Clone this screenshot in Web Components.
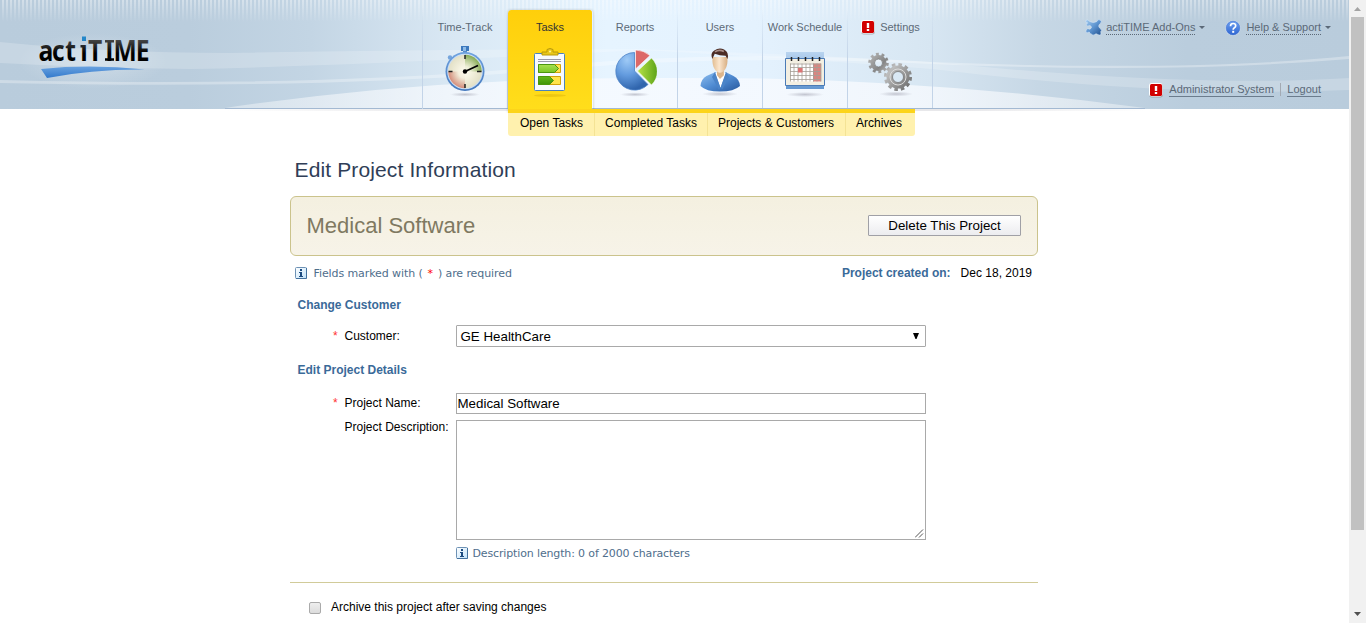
<!DOCTYPE html>
<html lang="en">
<head>
<meta charset="utf-8">
<title>actiTIME - Edit Project Information</title>
<style>
html,body{margin:0;height:100%;overflow:hidden;background:#fff;font:12px "Liberation Sans",Arial,sans-serif;color:#000}
</style>
</head>
<body>
<at-app></at-app>
<script>
const define=(name,html,setup)=>customElements.define(name,class extends HTMLElement{
  connectedCallback(){
    if(this.shadowRoot)return;
    const t=document.createElement('template');
    t.innerHTML=html;
    this.attachShadow({mode:'open'}).append(t.content.cloneNode(true));
    if(setup)setup(this,this.shadowRoot);
  }
});

const icons={
clock:`<svg width="44" height="52" viewBox="0 0 44 52"><defs><linearGradient id="r" x2="0" y2="1"><stop stop-color="#6fa3e0"/><stop offset="1" stop-color="#4478bd"/></linearGradient><radialGradient id="s"><stop stop-color="#889" stop-opacity=".45"/><stop offset="1" stop-color="#889" stop-opacity="0"/></radialGradient><radialGradient id="f"><stop stop-color="#fffdf0"/><stop offset="1" stop-color="#e3e0c6"/></radialGradient><radialGradient id="gr" gradientUnits="userSpaceOnUse" cx="22" cy="25.500" r="16.700"><stop offset=".3" stop-color="#a9c67e" stop-opacity=".1"/><stop offset="1" stop-color="#84ab55"/></radialGradient><radialGradient id="rd" gradientUnits="userSpaceOnUse" cx="22" cy="25.500" r="16.700"><stop offset=".4" stop-color="#e0a594" stop-opacity=".05"/><stop offset="1" stop-color="#d58c7c"/></radialGradient></defs>
<ellipse cx="22" cy="48.500" rx="15" ry="2.200" fill="url(#s)"/><path d="M18 0h8v5h-8z" fill="#3d79bd"/><path d="M20 1h3v4h-3z" fill="#8fbce8"/><path d="M20 5h4v3h-4z" fill="#5a8cc8"/><circle cx="7" cy="11.500" r="2.200" fill="#76a5dc"/><path d="m8 12 3 3" stroke="#76a5dc" stroke-width="2"/><circle cx="22" cy="25.500" r="19.500" fill="url(#r)"/><circle cx="22" cy="25.500" r="17.800" fill="#c9ddf5"/><circle cx="22" cy="25.500" r="16.700" fill="url(#f)"/><path d="M22 8.800A16.700 16.700 0 0 1 38.700 25.500H22z" fill="url(#gr)"/><path d="M22 42.200A16.700 16.700 0 0 1 5.300 25.500H22z" fill="url(#rd)"/><path d="M22 9v4M22 38v4M5.500 25.500h4M34 25.500h4.500" stroke="#222" stroke-width="1.500"/><path d="m22 25.500 13-6" stroke="#000" stroke-width="1.800"/><circle cx="22" cy="25.500" r="2.200"/></svg>`,
tasks:`<svg width="44" height="52" viewBox="0 0 44 52"><defs><linearGradient id="g" x2="0" y2="1"><stop stop-color="#a8e04e"/><stop offset=".5" stop-color="#6cbf1e"/><stop offset="1" stop-color="#3f9408"/></linearGradient></defs><ellipse cx="22" cy="49.500" rx="16" ry="1.500" fill="#c89a00" opacity=".3"/><rect x="6.500" y="7.500" width="30" height="37" rx="1" fill="#f8faff" stroke="#4a83be"/><path d="M14 9V6h5V3.500q3-2 6 0V6h5v3z" fill="#e9c71b" stroke="#b9980b"/><circle cx="22" cy="5.500" r="1" fill="#fff5a0"/><path d="M10 13.500h23M10 15.500h23" stroke="#99a"/><path d="M10.500 18.500h22v8h-22zM10.500 30.500h22v8h-22z" fill="#ffe44c" stroke="#d1a30c"/><path d="M10.500 18.500h16l4 4-4 4h-16zM10.500 30.500h11l4 4-4 4h-11z" fill="url(#g)" stroke="#4b960f"/></svg>`,
reports:`<svg width="44" height="52" viewBox="0 1 44 52"><defs><radialGradient id="p" cx=".35" cy=".2" r=".8"><stop stop-color="#9ecaf6"/><stop offset=".5" stop-color="#649cdf"/><stop offset="1" stop-color="#3065ad"/></radialGradient><linearGradient id="g"><stop stop-color="#b7e247"/><stop offset="1" stop-color="#5ca319"/></linearGradient><radialGradient id="s"><stop stop-color="#889" stop-opacity=".45"/><stop offset="1" stop-color="#889" stop-opacity="0"/></radialGradient></defs><ellipse cx="22" cy="49.500" rx="15" ry="2.200" fill="url(#s)"/><path d="M21.500 26V7.500A18.800 18.800 0 1 0 35 39.500z" fill="url(#p)" stroke="#4b82c7" stroke-width=".8"/><path d="M22.500 24V5q8 0 14.500 5.500z" fill="#dc6868" stroke="#fff" stroke-width=".6"/><path d="M24.500 26 38.500 13a18.500 18.500 0 0 1 0 27z" fill="url(#g)" stroke="#fff" stroke-width=".6"/></svg>`,
users:`<svg width="44" height="52" viewBox="0 0 44 52"><defs><linearGradient id="u" x2="1" y2="1"><stop stop-color="#90c0f0"/><stop offset=".5" stop-color="#4f8bd2"/><stop offset="1" stop-color="#27579c"/></linearGradient><linearGradient id="k"><stop stop-color="#e2bd91"/><stop offset=".45" stop-color="#fbe6cd"/><stop offset="1" stop-color="#d7ae82"/></linearGradient><radialGradient id="s"><stop stop-color="#889" stop-opacity=".45"/><stop offset="1" stop-color="#889" stop-opacity="0"/></radialGradient></defs><ellipse cx="22" cy="48" rx="18" ry="2.500" fill="url(#s)"/><path d="M2.500 40q.5-7 6-10l9-4h10l8 4q6 3 6.500 10-6 5.500-20 5.500T2.500 40z" fill="url(#u)"/><path d="m17 27 5.500 15L28 27l-5-3z" fill="#fff"/><path d="m17 26-3 5 7 13 1.500-2zM28 26l3 5-6.500 12-2-1z" fill="#4b84c8"/><g transform="translate(.4 1.600) scale(.98 .95)"><path d="M19 22h7v7l-4 4-3-4z" fill="#dcb58b"/><path d="M14.500 10h15q.8 8-2 12.500-2.500 4-5.500 4t-5.500-4q-2.800-4.500-2-12.500z" fill="url(#k)"/><path d="M14.200 12q-2.500-6 2-9 5-3.500 10-1 5.500 3 3.500 10l-2-3.500q-6 0-11-2z" fill="#4b2c25"/><path d="M17 4.500q4-3 9-.5" stroke="#a98e88" stroke-width="1.800" fill="none"/></g></svg>`,
calendar:`<svg width="44" height="52" viewBox="0 0 44 52"><defs><radialGradient id="s"><stop stop-color="#889" stop-opacity=".45"/><stop offset="1" stop-color="#889" stop-opacity="0"/></radialGradient><linearGradient id="t" x2="0" y2="1"><stop stop-color="#b9d4ef"/><stop offset="1" stop-color="#6296d0"/></linearGradient></defs><ellipse cx="22" cy="48.500" rx="19" ry="2.500" fill="url(#s)"/><path d="M3 6h38v37H3z" fill="url(#t)"/><path d="M2.500 12.500h39v27h-39z" fill="#f3efe2" stroke="#4b7bb6"/><path d="M7.500 17.500h30v18h-30z" fill="#fff"/><path d="M30 17.500h8v18h-8z" fill="#db8580"/><path d="M7.500 17.500v18M11 17.500v18M15 17.500v18M19 17.500v18M23 17.500v18M27 17.500v18M30.500 17.500v18M34 17.500v18M38 17.500v18M7 18h31M7 21.500h31M7 25.500h31M7 29.500h31M7 33.500h31" stroke="#a59e96" stroke-width=".8"/><path d="M15 22h4.500v4.500H15z" fill="#dc7474"/><path d="M8.500 11v4M15.500 11v4M22.500 11v4M29.500 11v4M36.500 11v4" stroke="#222" stroke-width="1.500"/></svg>`,
settings:`<svg width="52" height="52" viewBox="0 0 52 52"><defs><linearGradient id="m" gradientUnits="userSpaceOnUse" x1="5" y1="8" x2="46" y2="44"><stop stop-color="#b8b8b8"/><stop offset=".3" stop-color="#858585"/><stop offset=".5" stop-color="#bdbdbd"/><stop offset="1" stop-color="#686868"/></linearGradient><radialGradient id="s"><stop stop-color="#889" stop-opacity=".45"/><stop offset="1" stop-color="#889" stop-opacity="0"/></radialGradient></defs><ellipse cx="32" cy="48" rx="17" ry="2.500" fill="url(#s)"/><g fill="none" stroke="url(#m)"><circle cx="14.500" cy="17" r="6" stroke-width="4"/><circle cx="14.500" cy="17" r="8.800" stroke-width="3" stroke-dasharray="2.800 2.729"/><circle cx="34" cy="31" r="8.500" stroke-width="6"/><circle cx="34" cy="31" r="12.500" stroke-width="3" stroke-dasharray="3.545 3"/></g><circle cx="14.500" cy="17" r="4" fill="none" stroke="#777" stroke-width=".7"/><circle cx="34" cy="31" r="5.500" fill="none" stroke="#777" stroke-width=".8"/><circle cx="34" cy="31" r="8" fill="none" stroke="#dcdcdc" stroke-width="1"/></svg>`,
alert:`<svg width="16" height="16" viewBox="0 0 16 16"><rect x="1" y="1.500" width="14" height="14" rx="3" fill="#777" opacity=".5"/><rect x="1" y="1" width="13.500" height="13.500" rx="2.500" fill="#fff"/><rect x="2" y="2" width="12" height="12" rx="1.500" fill="#d20000"/><path d="M6.800 4h2.400v5H6.800zM6.800 10h2.400v2H6.800z" fill="#fff"/></svg>`,
puzzle:`<svg width="18" height="17" viewBox="0.7 0 17 17"><defs><linearGradient id="z" x2="1" y2="1"><stop stop-color="#a6cdf0"/><stop offset=".5" stop-color="#5c93cf"/><stop offset="1" stop-color="#20508f"/></linearGradient></defs><path d="M1 1.500Q3-.3 5 2.500q3.500 2 7 0Q13-.3 15.500 1q2 1.500 0 3.500-2 1.500-1.500 3 .5 1.500 2 2.500 1.500 1.500 0 2.500l.2 3q-1.700 1-3.200 0-2-1.500-3 0-2 1.500-3.500-.5-2 0-2-2Q2 14.500 1 13q-.3-2.500 2-3.500 2.500 1.500 3.500-.5.5-2-1.500-2.500Q2 8 1.500 6T3 4Q0 3.500 1 1.500z" fill="url(#z)" stroke="#d5e6f6" stroke-width=".6"/></svg>`,
help:`<svg width="16" height="16" viewBox="0 0 16 16"><defs><linearGradient id="h" x2="0" y2="1"><stop stop-color="#6d9ff0"/><stop offset="1" stop-color="#2f66d2"/></linearGradient></defs><circle cx="8" cy="8" r="7.600" fill="#eef4fd"/><circle cx="8" cy="8" r="6.900" fill="url(#h)" stroke="#3b6fc9" stroke-width=".6"/><path d="M5.500 6.300q0-2.800 2.600-2.800t2.600 2.300q0 1.300-1.300 2T8.200 9.700" fill="none" stroke="#fff" stroke-width="1.700"/><path d="M7.200 10.800h2v2h-2z" fill="#fff"/></svg>`,
info:`<svg width="12" height="12" viewBox="0 0 12 12"><defs><linearGradient id="i" x2="1" y2="1"><stop stop-color="#fff"/><stop offset="1" stop-color="#c1e2fa"/></linearGradient></defs><rect x=".5" y=".5" width="11" height="11" rx="1" fill="url(#i)" stroke="#6e92b5"/><path d="M11.500 1v10.500H1" fill="none" stroke="#44729f"/><path d="M5 2h2v2H5zM4 5h3v4h1v1H4V9h1V6H4z" fill="#1c4b80"/></svg>`
};
define('at-icon','<style>:host{display:block;flex:none}svg{display:block}</style>',(el,r)=>r.append(document.createRange().createContextualFragment(icons[el.getAttribute('name')])));

define('at-logo',`<style>:host{display:block;width:112px;height:46px}svg{display:block;overflow:visible}text{font:bold 29px "Open Sans",sans-serif}</style>
<svg width="112" height="46"><defs><linearGradient id="w" x2="0" y2="1"><stop stop-color="#68a1df"/><stop offset="1" stop-color="#3279cc"/></linearGradient><linearGradient id="b" gradientUnits="userSpaceOnUse" x1="0" x2="0" y1="2" y2="24"><stop stop-color="#4a4a4a"/><stop offset=".65" stop-color="#000"/></linearGradient><radialGradient id="q"><stop stop-color="#fff" stop-opacity=".3"/><stop offset="1" stop-color="#fff" stop-opacity="0"/></radialGradient></defs><ellipse cx="55" cy="24" rx="75" ry="28" fill="url(#q)"/><text transform="scale(.85 1)" x=".5 16.600 32 49.800 58.800 79.200 88.800 115" y="23.700" fill="url(#b)">act&#305;TIME</text><path d="M67 3h9v2.500h-9zM67 21.200h9v2.500h-9zM42.500 8h3v2.500h-3z" fill="url(#b)"/><path d="M44 -.5h4v4.500h-4z" fill="#2587c9"/><path d="M3 32q50-5 104 0.500-52-.5-98 8.500z" fill="url(#w)"/></svg>`);

define('at-tab',`<style>:host{display:block;width:84px;height:98px;margin-top:10px;border-right:1px solid;border-image:linear-gradient(#c3d4e800,#c3d4e8 50%) 1;color:#5d6a77;box-sizing:content-box}
.l{display:flex;height:16px;margin-top:9px;align-items:center;justify-content:center;gap:4px;font-size:11px;line-height:16px;white-space:nowrap}
.i{display:flex;justify-content:center;margin-top:11px}
:host([active]){background:linear-gradient(#ffcf0b,#ffde1c);color:#333;height:103px;border-radius:3px 3px 0 0;box-shadow:0 0 3px #0003;clip-path:inset(-2px -3px 0 -3px);border-image:none;border-color:transparent;background-clip:padding-box}
::slotted(at-icon){margin-left:0}</style><div class="l"><slot></slot></div><div class="i"><at-icon></at-icon></div>`,(el,r)=>{
  const old=r.querySelector('.i at-icon'),i=document.createElement('at-icon');i.setAttribute('name',el.getAttribute('icon'));old.replaceWith(i);});

define('at-submenu',`<style>:host{display:flex;box-sizing:border-box;width:407px;height:27px;margin-left:508px;border-top:4px solid #fcd41a;background:#fff1ae;border-radius:0 0 3px 3px}
span{box-sizing:border-box;text-align:center;line-height:20px;border-right:1px solid #f4e395;font-size:12px}span:last-child{border:0}</style>
<span style="width:87px;padding-left:1px">Open Tasks</span><span style="width:113px">Completed Tasks</span><span style="width:138px;padding-right:1px">Projects &amp; Customers</span><span style="width:69px;padding-right:3px">Archives</span>`);

define('at-tools',`<style>:host{display:flex;flex-direction:column;align-items:flex-end;box-sizing:border-box;width:417px;padding:19px 19px 0 0;color:#5b6978}
div{display:flex;align-items:center;height:17px}
.b{margin-top:45px;padding-right:10px}
span{font-size:11px;line-height:12px;height:13px;white-space:nowrap}
.d{border-bottom:1px dotted #5b6978}.u{border-bottom:1px solid #6b7c8d}
i{margin-left:4px;border:3px solid transparent;border-top-color:#5b6978;border-bottom:0}
hr{width:1px;height:13px;margin:0 6px 0 6.500px;border:0;background:#a3aab3}</style>
<div><at-icon name="puzzle"></at-icon><span class="d" style="margin-left:3px">actiTIME Add-Ons</span><i></i><at-icon name="help" style="margin-left:20px"></at-icon><span class="d" style="margin-left:5px">Help &amp; Support</span><i></i></div>
<div class="b"><at-icon name="alert"></at-icon><span class="u" style="margin-left:5px">Administrator System</span><hr><span class="u">Logout</span></div>`);

define('at-header',`<style>:host{display:grid;height:109px;position:relative;background:#bacddd;overflow:visible}
svg.bg{position:absolute;inset:0;width:1349px;height:112px}
.row{display:flex;position:relative;height:109px}
at-logo{margin:37px 272px 0 38px;flex:none}
nav{display:flex;border-left:1px solid;border-image:linear-gradient(#c3d4e800 10%,#c3d4e8 50%) 1}</style>
<svg class="bg" viewBox="0 0 1349 112"><defs>
<linearGradient id="a"><stop stop-color="#b9ccdc"/><stop offset=".14" stop-color="#bacddd"/><stop offset=".23" stop-color="#c3d5e4"/><stop offset=".33" stop-color="#d8e7f3"/><stop offset=".45" stop-color="#e6f4ff"/><stop offset=".56" stop-color="#e4f2fe"/><stop offset=".69" stop-color="#d7e6f2"/><stop offset=".77" stop-color="#c6d7e5"/><stop offset=".88" stop-color="#bacddd"/><stop offset="1" stop-color="#b9ccdc"/></linearGradient>
<linearGradient id="f" x2="0" y2="1"><stop stop-color="#fff" stop-opacity=".38"/><stop offset="1" stop-color="#fff" stop-opacity="0"/></linearGradient>
<linearGradient id="hl" gradientUnits="userSpaceOnUse" x1="220" x2="1145" y1="0" y2="0"><stop stop-color="#fff" stop-opacity=".35"/><stop offset=".3" stop-color="#f9fbff" stop-opacity=".75"/><stop offset=".75" stop-color="#f9fbff" stop-opacity=".75"/><stop offset="1" stop-color="#fff" stop-opacity=".35"/></linearGradient>
<linearGradient id="sh" gradientUnits="userSpaceOnUse" x1="225" x2="1145" y1="0" y2="0"><stop stop-color="#667" stop-opacity="0"/><stop offset=".25" stop-color="#667" stop-opacity=".15"/><stop offset=".8" stop-color="#667" stop-opacity=".15"/><stop offset="1" stop-color="#667" stop-opacity="0"/></linearGradient>
<pattern id="st" width="4" height="22" patternUnits="userSpaceOnUse"><path d="M2 0h2v22H2z" fill="url(#f)"/></pattern></defs>
<path fill="url(#a)" d="M0 0h1349v109H0z"/><path fill="url(#st)" d="M0 0h1349v22H0z"/>
<path d="M0 42Q110 53 230 53 450 49 640 49 790 54 932 62 1190 88 1349 78V90Q1170 98 932 69 790 58 640 50 350 66 190 69 90 68 0 63z" fill="#fff" opacity=".2"/>
<path d="M0 80Q330 88 560 65 730 49 932 62 1190 72 1349 56V59Q1170 74 932 64 730 54 560 69 330 90 0 83z" fill="#fff" opacity=".3"/>
<path d="M225 108Q440 76 677 78 900 76 1145 108z" fill="url(#hl)"/>
<path d="M225 108.500H1145" stroke="#a3b9d2"/><path d="M225 109h920v2H225z" fill="url(#sh)"/></svg>
<div class="row"><at-logo></at-logo><nav>
<at-tab icon="clock">Time-Track</at-tab><at-tab icon="tasks" active>Tasks</at-tab><at-tab icon="reports">Reports</at-tab><at-tab icon="users">Users</at-tab><at-tab icon="calendar">Work Schedule</at-tab><at-tab icon="settings"><at-icon name="alert"></at-icon>Settings</at-tab></nav><at-tools></at-tools></div>`);

define('at-scrollbar',`<style>:host{display:flex;flex-direction:column;width:17px;height:623px;background:#f1f1f1;align-items:center}
svg{flex:none}div{width:13px;height:513px;background:#c1c1c1}p{flex:1;margin:0}</style>
<svg width="17" height="17"><path d="M5 11h7L8.500 7z" fill="#a3a3a3"/></svg><div></div><p></p><svg width="17" height="17"><path d="M5 6h7l-3.500 4z" fill="#505050"/></svg>`);

define('at-note',`<style>:host{display:flex;align-items:center;font:11px/14px "DejaVu Sans",sans-serif;color:#4f6e8c;white-space:nowrap;letter-spacing:-.14px}div{margin:2px 0 0 4.500px}</style><at-icon name="info"></at-icon><div><slot></slot></div>`);
define('at-section',`<style>:host{display:block;font-weight:bold;color:#3a6a99;line-height:14px;padding-left:7.500px}</style><slot></slot>`);
define('at-field',`<style>:host{display:grid;grid-template-columns:43px 11.500px 111.500px 470px;line-height:14px}
b{grid-column:2;font:12px/14px "Liberation Sans",sans-serif;color:#f33;padding-top:var(--drop,0)}
label{grid-column:3;white-space:nowrap;padding-top:var(--drop,0)}:host(:not([required])) b{visibility:hidden}</style><b>*</b><label></label><slot></slot>`,(el,r)=>r.querySelector('label').textContent=el.getAttribute('label'));
define('at-select',`<style>:host{display:flex;box-sizing:border-box;height:22px;border:1px solid #a9a9a9;border-radius:1px;align-items:center;justify-content:space-between;padding:1px 5px 0 3.500px;font-size:13.333px}svg{display:block;margin-top:-1px}</style><slot></slot><svg width="8" height="7"><path d="M1 0h6L4.500 6h-1z"/></svg>`);
define('at-input',`<style>:host{display:block;box-sizing:border-box;height:21px;border:1px solid #a9a9a9;padding-left:.5px;font-size:13.333px;line-height:19px}</style><slot></slot>`);
define('at-textarea',`<style>:host{display:flex;box-sizing:border-box;height:120px;border:1px solid #a9a9a9;align-items:flex-end;justify-content:flex-end;padding:1px}svg{display:block}</style><svg width="9" height="9"><path d="m0 8.500 8-8M4 8.500l4-4" stroke="#555"/></svg>`);
define('at-project-bar',`<style>:host{display:flex;box-sizing:border-box;height:60px;border:1px solid #cbc38c;border-radius:6px;background:linear-gradient(#f4f0e0,#f7f3e8);align-items:center;justify-content:space-between;padding:0 16px 0 15.500px;font-size:22px;color:#7f7961}
button{box-sizing:border-box;width:153px;height:21px;margin:0 0 1px;padding:0;border:1px solid #a0a0a6;border-radius:1px;background:linear-gradient(#fff,#ececef);font:13.330px/18px "Liberation Sans",sans-serif;color:#000}</style><slot></slot><button>Delete This Project</button>`);

define('at-project-form',`<style>:host{display:flex;flex-direction:column;width:748px;margin-left:290px;height:487px}
h1{margin:21px 0 0 4.500px;font:21px/26px "Liberation Sans",sans-serif;letter-spacing:.13px;color:#2f3e57}
at-project-bar{margin-top:13px}
.info{display:flex;justify-content:space-between;margin:10px 6px 0 5px;height:14px;line-height:14px}
.info b{color:#3a6a99;margin-right:10px}
.info span{margin-left:2px;letter-spacing:-.09px}
em{font-style:normal;color:#f00;margin:0 1.500px}
.foot{display:flex;flex:none;align-items:center;margin-top:21px;border-top:1px solid #d1cb99;padding:18px 0 0 19px;height:13px;line-height:13px}
.foot i{box-sizing:border-box;width:12px;height:12px;border:1px solid #aaa;border-radius:2px;background:linear-gradient(#eee,#dcdcdc);margin-right:10px}</style>
<h1>Edit Project Information</h1>
<at-project-bar>Medical Software</at-project-bar>
<div class="info"><at-note><span>Fields marked with ( <em>*</em> ) are required</span></at-note><div><b>Project created on:</b>Dec 18, 2019</div></div>
<at-section style="margin-top:18px">Change Customer</at-section>
<at-field required label="Customer:" style="margin-top:13px;--drop:4px"><at-select>GE HealthCare</at-select></at-field>
<at-section style="margin-top:16px">Edit Project Details</at-section>
<at-field required label="Project Name:" style="margin-top:16px;--drop:3px"><at-input>Medical Software</at-input></at-field>
<at-field label="Project Description:" style="margin-top:6px"><at-textarea></at-textarea></at-field>
<at-note style="margin:5px 0 0 166px;height:16px">Description length: 0 of 2000 characters</at-note>
<div class="foot"><i></i>Archive this project after saving changes</div>`);

define('at-app',`<style>:host{display:grid;grid-template-columns:1349px 17px;height:623px;overflow:hidden}main{min-width:0;overflow:hidden}at-submenu{position:relative}</style>
<main><at-header></at-header><at-submenu></at-submenu><at-project-form></at-project-form></main><at-scrollbar></at-scrollbar>`);
</script>
</body>
</html>
